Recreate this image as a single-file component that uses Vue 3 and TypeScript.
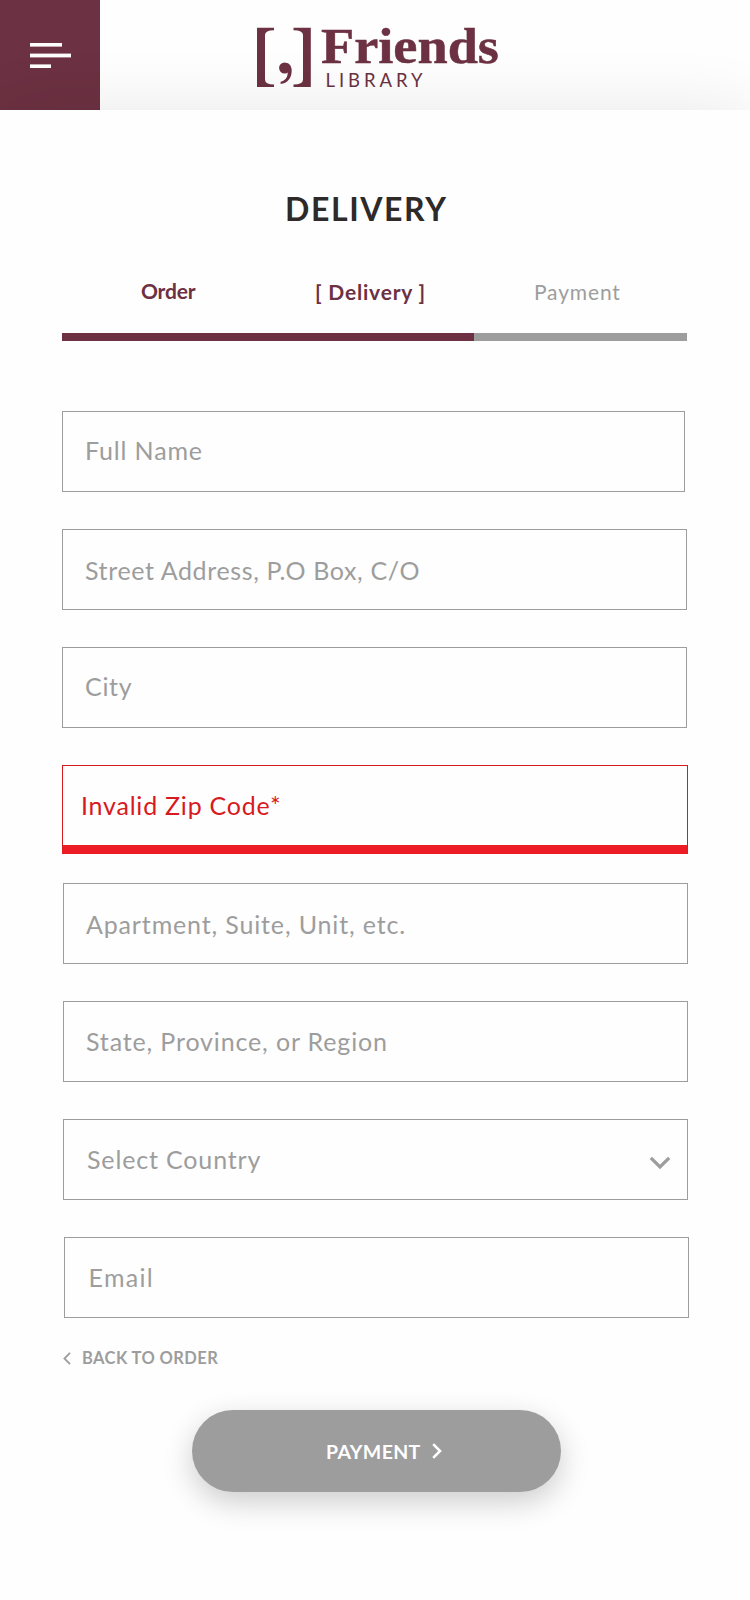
<script setup lang="ts">
interface Field {
  id: string
  label: string
  invalid?: boolean
  select?: boolean
}

const steps = [
  { id: 'order', label: 'Order' },
  { id: 'delivery', label: '[ Delivery ]' },
  { id: 'payment', label: 'Payment' },
]

const fields: Field[] = [
  { id: 'name', label: 'Full Name' },
  { id: 'street', label: 'Street Address, P.O Box, C/O' },
  { id: 'city', label: 'City' },
  { id: 'zip', label: 'Invalid Zip Code*', invalid: true },
  { id: 'unit', label: 'Apartment, Suite, Unit, etc.' },
  { id: 'state', label: 'State, Province, or Region' },
  { id: 'country', label: 'Select Country', select: true },
  { id: 'email', label: 'Email' },
]
</script>

<template>
  <div class="page">
    <header class="header">
      <button class="menu" aria-label="Menu">
        <svg width="41" height="26" viewBox="0 0 41 26" fill="#fff">
          <rect width="32" height="3.6" y="0" />
          <rect width="41" height="3.8" y="10.6" />
          <rect width="21" height="3.6" y="21.4" />
        </svg>
      </button>
      <svg class="logo" width="280" height="80" viewBox="0 0 280 80" fill="#6c3142">
        <path d="M2 7.800H19V10.300Q10 10.300 10 15V59.500Q10 64.500 19 64.500V67H2Z" />
        <path d="M55.800 7.800H38.500V10.300Q48 10.300 48 15V59.500Q48 64.500 38.500 64.500V67H55.800Z" />
        <circle cx="29.600" cy="48" r="5.500" />
        <path d="M31 43C34.500 43 36.700 46.500 36.700 50.500C36.700 58 32.500 63.300 25.600 64V61.800C30.500 60.500 32.700 57.500 32.700 52Z" />
        <text class="logo-name" x="66" y="43" textLength="178" lengthAdjust="spacingAndGlyphs">Friends</text>
        <text class="logo-sub" x="70.500" y="66.800" textLength="97">LIBRARY</text>
      </svg>
    </header>

    <main class="main">
      <h1 class="title">DELIVERY</h1>
      <nav class="steps">
        <span v-for="s in steps" :key="s.id" class="step" :class="s.id">{{ s.label }}</span>
      </nav>
      <div class="progress"><div class="done"></div></div>

      <form class="form">
        <div
          v-for="f in fields"
          :key="f.id"
          class="field"
          :class="[f.id, { invalid: f.invalid }]"
        >
          <span class="label">{{ f.label }}</span>
          <svg v-if="f.select" class="caret" width="22" height="14" viewBox="0 0 22 14">
            <path d="M1.800 1.800L11 11L20.200 1.800" fill="none" stroke="#9d9d9d" stroke-width="3.300" />
          </svg>
        </div>
      </form>

      <a class="back">
        <svg width="8" height="13" viewBox="0 0 8 13">
          <path d="M7 .8L1.400 6.500L7 12.200" fill="none" stroke="#9d9d9d" stroke-width="1.800" />
        </svg>
        <span>BACK TO ORDER</span>
      </a>

      <button class="submit">
        <span>PAYMENT</span>
        <svg width="10" height="16" viewBox="0 0 10 16">
          <path d="M1.200 1.200L8 8L1.200 14.800" fill="none" stroke="#fff" stroke-width="2.600" />
        </svg>
      </button>
    </main>
  </div>
</template>

<style>
body {
  background: #fefefe;
}
</style>

<style scoped>
.page {
  width: 750px;
  height: 1600px;
  overflow: hidden;
  background: #fefefe;
  font-family: Lato, "Open Sans", sans-serif;
  color: #9d9d9d;
}
.header {
  display: flex;
  height: 110px;
}
.menu {
  box-sizing: border-box;
  width: 100px;
  height: 110px;
  padding: 43px 0 0 30px;
  border: 0;
  background: #6c3142;
  display: flex;
  align-items: flex-start;
}
.logo {
  margin: 20px 0 0 155px;
  overflow: visible;
}
.logo-name {
  font: bold 51px "Liberation Serif", serif;
  stroke: #6c3142;
  stroke-width: 0.5px;
}
.logo-sub {
  font: 18.5px Lato, sans-serif;
}
.main {
  position: relative;
  display: flex;
  flex-direction: column;
  height: 1490px;
  background: #fefefe;
  box-shadow: 0 0 64px rgba(0, 0, 0, 0.09);
}
.title {
  margin: 79px 0 0 285px;
  font-size: 32px;
  line-height: 40px;
  font-weight: 700;
  letter-spacing: 1.6px;
  color: #2d2a29;
  white-space: nowrap;
}
.steps {
  display: grid;
  grid-template-columns: 174px 219px 1fr;
  margin: 47px 0 0 141px;
  height: 31px;
  font-size: 21px;
  line-height: 29px;
  white-space: nowrap;
}
.step.order,
.step.delivery {
  font-weight: 700;
  color: #6c3142;
}
.step.order {
  letter-spacing: -0.2px;
}
.step.delivery {
  letter-spacing: 0.8px;
}
.step.payment {
  letter-spacing: 0.85px;
}
.step.delivery,
.step.payment {
  line-height: 31px;
}
.progress {
  margin: 26px 0 0 62px;
  width: 625px;
  height: 8px;
  background: #9d9d9d;
}
.done {
  width: 412px;
  height: 8px;
  background: #6c3142;
}
.form {
  display: flex;
  flex-direction: column;
  gap: 37px;
  margin: 70px 0 0 62px;
}
.field {
  box-sizing: border-box;
  display: flex;
  justify-content: space-between;
  align-items: flex-start;
  width: 625px;
  height: 81px;
  padding-left: 22px;
  border: 1px solid #9d9d9d;
  font-size: 25px;
  line-height: 78px;
  letter-spacing: 0.85px;
  white-space: nowrap;
}
.name {
  width: 623px;
  line-height: 76px;
}
.street {
  line-height: 80px;
  letter-spacing: 0.62px;
}
.city {
  line-height: 76px;
  letter-spacing: 0.7px;
}
.invalid {
  width: 626px;
  height: 89px;
  margin-bottom: -8px;
  padding-left: 18px;
  border-color: #d71920;
  border-bottom: 9px solid #ed1c24;
  color: #d71920;
  letter-spacing: 0.78px;
}
.unit {
  line-height: 80px;
}
.unit,
.state,
.country {
  margin-left: 1px;
}
.country {
  padding-left: 23px;
}
.email {
  margin-left: 2px;
  padding-left: 23.5px;
  letter-spacing: 1.3px;
}
.caret {
  margin: 36px 16px 0 0;
}
.back {
  display: flex;
  align-items: center;
  gap: 11px;
  height: 20px;
  margin: 30px 0 0 63px;
  font-size: 16.5px;
  line-height: 20px;
  font-weight: 700;
  letter-spacing: 0.4px;
  white-space: nowrap;
}
.submit {
  display: flex;
  align-items: center;
  gap: 11.5px;
  width: 369px;
  height: 82px;
  margin: 42px 0 0 192px;
  padding: 0 0 0 134px;
  border: 0;
  border-radius: 41px;
  background: #9d9d9d;
  box-shadow: 0 10px 30px rgba(0, 0, 0, 0.2);
  color: #fff;
  font-family: inherit;
  font-size: 19.5px;
  font-weight: 700;
  letter-spacing: 0.35px;
}
</style>
